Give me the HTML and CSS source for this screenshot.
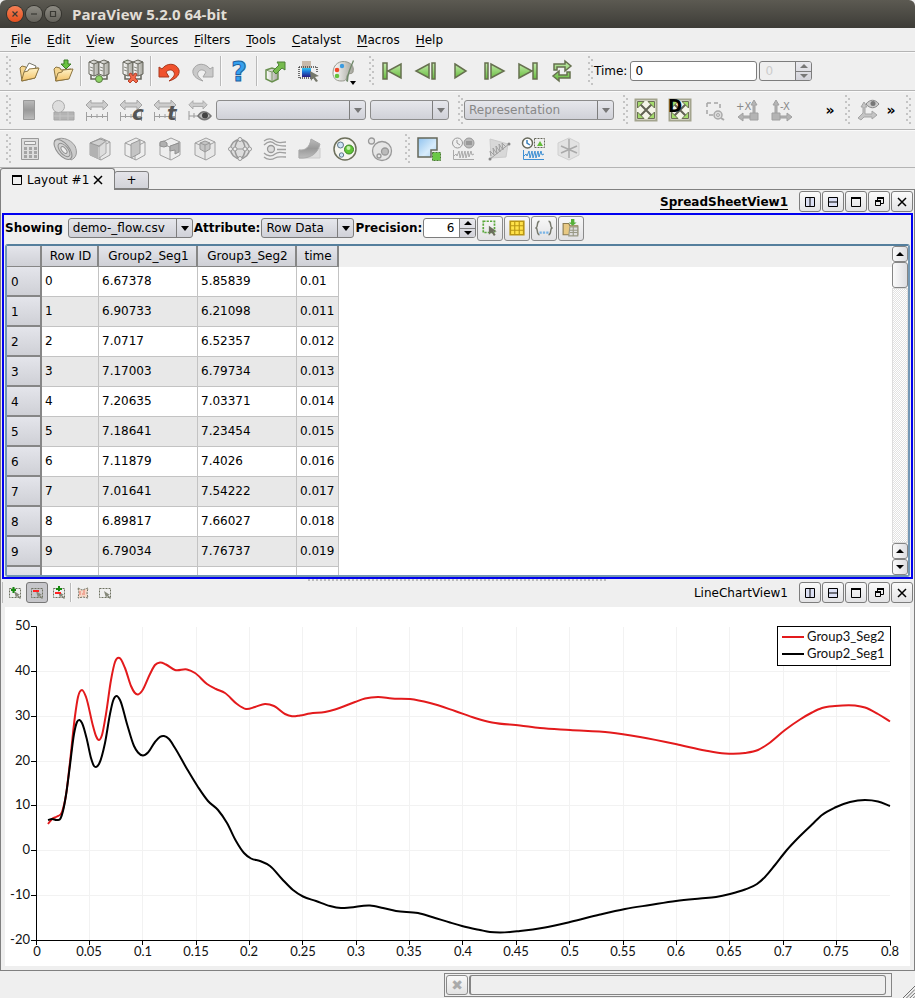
FILE: index.html
```html
<!DOCTYPE html>
<html lang="en">
<head>
<meta charset="utf-8">
<title>ParaView 5.2.0 64-bit</title>
<link rel="stylesheet" href="styles.css">
</head>
<body>
<svg class="defs" aria-hidden="true">
  <defs>
    <linearGradient id="green" x1="0" y1="0" x2="0" y2="1"><stop offset="0" stop-color="#c4ecac"/><stop offset="1" stop-color="#66bb3c"/></linearGradient>
    <linearGradient id="metal" x1="0" y1="0" x2="1" y2="0"><stop offset="0" stop-color="#fff"/><stop offset="1" stop-color="#a5a59c"/></linearGradient>
    <linearGradient id="gray" x1="0" y1="0" x2="0" y2="1"><stop offset="0" stop-color="#bbb"/><stop offset=".5" stop-color="#999"/><stop offset="1" stop-color="#bdbdbd"/></linearGradient>
    <linearGradient id="sky" x1="0" y1="0" x2="1" y2="1"><stop offset="0" stop-color="#8fc2ee"/><stop offset=".6" stop-color="#d8ecfb"/><stop offset="1" stop-color="#a8d0f2"/></linearGradient>
    <linearGradient id="folder" x1="0" y1="0" x2="0" y2="1"><stop offset="0" stop-color="#fff3c8"/><stop offset="1" stop-color="#f3c267"/></linearGradient>
    <linearGradient id="rainbow" x1="0" y1="0" x2="0" y2="1"><stop offset="0" stop-color="#38c8f0"/><stop offset=".4" stop-color="#1a78d8"/><stop offset="1" stop-color="#281880"/></linearGradient>
    <symbol id="i-folder" viewBox="0 0 24 24"><path d="M3 9l2-2 4 1 1 2 11-1-3 10-13 3z" fill="#f6d68e" stroke="#8b7440"/><path d="M7 13L12 4l7 3-3 8z" fill="#fff" stroke="#77776a"/><path d="M4.500 22L7 13l4-1 1-2 10-1-4 10z" fill="url(#folder)" stroke="#8b7440"/></symbol>
    <symbol id="i-folder-in" viewBox="0 0 24 24"><path d="M3 10l2-2 4 1 1 2 10-1-3 10-12 2z" fill="#f6d68e" stroke="#8b7440"/><path d="M4.500 22L7 14l4-1 1-2 10-1-4 10z" fill="url(#folder)" stroke="#8b7440"/><path d="M13 1h4v4h3l-5 5-5-5h3z" fill="#69c240" stroke="#3a7a26"/></symbol>
    <symbol id="i-servers" viewBox="0 0 24 24"><g stroke="#66665c"><path d="M2 3l5-2 5 2v12l-5 2-5-2z" fill="url(#metal)"/><path d="M12 3l5-2 5 2v12l-5 2-5-2z" fill="url(#metal)"/><path d="M2 3l5 2 5-2 5 2 5-2M7 5v12M17 5v12" fill="none"/><path d="M3 8l3 1M13 8l3 1M3 11l3 1M13 11l3 1" fill="none" stroke="#8c8c82"/><path d="M4 16v4h16v-4" fill="none" stroke-width="1.500"/></g></symbol>
    <symbol id="i-undo" viewBox="0 0 24 24"><path d="M2 18V8l3 2c4-6 14-7 17 1 1 5-3 9-10 11 5-4 7-7 4-10-2-2-5-1-7 1l3 5z" stroke-linejoin="round"/></symbol>
    <symbol id="i-first" viewBox="0 0 24 24"><path d="M3 4h4v16H3zM21 5v14L8 12z"/></symbol>
    <symbol id="i-prev" viewBox="0 0 24 24"><path d="M15 5v14L2 12zM18 4h3v16h-3z"/></symbol>
    <symbol id="i-play" viewBox="0 0 24 24"><path d="M7 5l11 7-11 7z"/></symbol>
    <symbol id="i-axis" viewBox="0 0 24 24"><path d="M14 15h8v7h-8zM17 15V7h-2l3-5 3 5h-2v8M14 18H7v-3l-5 4 5 4v-3h7"/></symbol>
    <symbol id="i-double" viewBox="0 0 24 24"><path d="M1 7l5-5v3h12V2l5 5-5 5V9H6v3z" fill="#ccc" stroke="#a5a5a5"/></symbol>
    <symbol id="i-ruler" viewBox="0 0 24 24"><path d="M1.500 14v9M22.500 14v9M1 18.500h22M6.500 16v4M12 16v4M17.500 16v4" fill="none" stroke="#a0a0a0"/></symbol>
    <symbol id="i-cube" viewBox="0 0 24 24"><path d="M2 6l11-5 9 4v13l-9 5-11-5zM2 6l10 4 10-5M12 10v13" stroke="#a0a0a0" stroke-linejoin="round"/></symbol>
    <symbol id="i-extent" viewBox="0 0 24 24"><path d="M1.500 1.500h21v21h-21z" fill="#f4f4e8" stroke="#a3a48e" stroke-width="2"/><path d="M6 6l12 12M18 6L6 18" stroke="#626254" stroke-width="2"/><path d="M3.500 3.500H10l-6.500 6.500zM20.500 3.500H14l6.500 6.500zM3.500 20.500H10L3.500 14zM20.500 20.500H14l6.500-6.500z" fill="#a4dc6c" stroke="#6b7054"/></symbol>
    <symbol id="i-cols" viewBox="0 0 12 12"><path d="M1.500 1.500h9v9h-9zM6 1.500v9" fill="#dce0f4" stroke="#000"/></symbol>
    <symbol id="i-rows" viewBox="0 0 12 12"><path d="M1.500 1.500h9v9h-9zM1.500 6h9" fill="#dce0f4" stroke="#000"/></symbol>
    <symbol id="i-max" viewBox="0 0 12 12"><path d="M1.500 2h9v8.500h-9z" fill="none" stroke="#000"/><path d="M1 1h10v2H1z"/></symbol>
    <symbol id="i-restore" viewBox="0 0 12 12"><path d="M4.500 5V2.500h6v5H8M2.500 5.500h5v4h-5z" fill="none" stroke="#000"/><path d="M4 1h7v2H4zM2 4h6v2H2z"/></symbol>
    <symbol id="i-close" viewBox="0 0 12 12"><path d="M2 2l8 8M10 2l-8 8" stroke="#000" stroke-width="1.500"/></symbol>
    <symbol id="i-pick" viewBox="0 0 14 14"><path d="M1.500 2.500h11v9h-11z" fill="none" stroke="#6d7060" stroke-dasharray="2 1"/><path d="M6 5l6 4-2 0 3 3-1 1-3-3-1 2z" fill="#85887a"/></symbol>
    <symbol id="i-pulse" viewBox="0 0 24 24"><path d="M1.500 13v9.500H22M2 19l2-2 1 2 2-5 1 7 2-7 1 7 2-7 1 7 2-7 1 6 2-6 1 4 2-1" fill="none"/></symbol>
  </defs>
</svg>

<header class="titlebar">
  <button class="win win-close" aria-label="Close"><svg viewBox="0 0 16 16"><path d="M5.500 5.500l5 5M10.500 5.500l-5 5"/></svg></button>
  <button class="win" aria-label="Minimize"><svg viewBox="0 0 16 16"><path d="M5 8h6"/></svg></button>
  <button class="win" aria-label="Maximize"><svg viewBox="0 0 16 16"><path d="M5.500 5.500h5v5h-5z"/></svg></button>
  <h1>ParaView 5.2.0 64-bit</h1>
</header>

<nav class="menubar">
  <button><u>F</u>ile</button><button><u>E</u>dit</button><button><u>V</u>iew</button><button><u>S</u>ources</button><button><u>F</u>ilters</button><button><u>T</u>ools</button><button><u>C</u>atalyst</button><button><u>M</u>acros</button><button><u>H</u>elp</button>
</nav>

<div class="toolbar" role="toolbar">
  <i class="grip first"></i>
  <button class="tool" aria-label="Open"><svg><use href="#i-folder"/></svg></button>
  <button class="tool" aria-label="Save data"><svg><use href="#i-folder-in"/></svg></button>
  <i class="sep"></i>
  <button class="tool" aria-label="Connect"><svg viewBox="0 0 24 24"><use href="#i-servers"/><circle cx="12" cy="20" r="3.500" fill="#8ed465" stroke="#5b7a45"/></svg></button>
  <button class="tool" aria-label="Disconnect"><svg viewBox="0 0 24 24"><use href="#i-servers"/><path d="M8 15l2-1 2 3 2-3 2 1-2 4 3 3-2 2-3-3-3 3-2-2 3-3z" fill="#f26a4a" stroke="#b8422c"/></svg></button>
  <i class="sep"></i>
  <button class="tool" aria-label="Undo"><svg class="undo"><use href="#i-undo"/></svg></button>
  <button class="tool" aria-label="Redo"><svg class="redo"><use href="#i-undo"/></svg></button>
  <i class="sep"></i>
  <button class="tool" aria-label="Help"><svg viewBox="0 0 24 24"><text class="help" x="12" y="22">?</text></svg></button>
  <i class="sep"></i>
  <button class="tool" aria-label="Find data"><svg viewBox="0 0 24 24"><path d="M3 11l6-2 6 2v9l-6 3-6-3z" fill="url(#metal)" stroke="#69904f" stroke-width="1.500"/><path d="M3 11l6 2 6-2M9 13v9" fill="none" stroke="#7d9a68"/><path d="M14 3h8v8l-3-2-6 6-3-3 6-6z" fill="#76bb4d" stroke="#4d7f36"/></svg></button>
  <button class="tool" aria-label="Edit color map"><svg viewBox="0 0 24 24"><path d="M5 2h9v10H5z" fill="#c8b9aa"/><path d="M5 9h9v9H5z" fill="url(#rainbow)"/><path d="M2 8v11h14M2 8h18v6" fill="none" stroke="#444" stroke-width="1.500" stroke-dasharray="1 1"/><path d="M13 12l9 5-4 1 3 4-2 1-3-4-2 3z" fill="#75776a"/></svg></button>
  <button class="tool" aria-label="Color palette"><svg viewBox="0 0 24 24"><path d="M2 14C2 5 9 1 16 3c6 2 7 6 6 10-1 3-5 0-6 4s-1 5-6 5c-5 0-8-3-8-8z" fill="url(#metal)" stroke="#96978c"/><circle cx="11" cy="7" r="2.200" fill="#3b9be0"/><circle cx="6" cy="11" r="2.300" fill="#f04828"/><circle cx="6" cy="17" r="2.300" fill="#65c33e"/><path d="M22 1c-3 7-6 14-7 21l2 1c0-7 3-14 6-21z" fill="#70886a"/></svg><svg class="more" viewBox="0 0 6 4"><path d="M0 0h6L3 4z"/></svg></button>
  <i class="grip"></i>
  <button class="tool" aria-label="First frame"><svg class="vcr"><use href="#i-first"/></svg></button>
  <button class="tool" aria-label="Previous frame"><svg class="vcr"><use href="#i-prev"/></svg></button>
  <button class="tool" aria-label="Play"><svg class="vcr"><use href="#i-play"/></svg></button>
  <button class="tool" aria-label="Next frame"><svg class="vcr flip"><use href="#i-prev"/></svg></button>
  <button class="tool" aria-label="Last frame"><svg class="vcr flip"><use href="#i-first"/></svg></button>
  <button class="tool" aria-label="Loop"><svg class="vcr" viewBox="0 0 24 24"><path d="M4 11V5h11V2l6 5-6 5V8H7v3zM20 13v6H9v3l-6-5 6-5v4h8v-3z"/></svg></button>
  <i class="grip"></i>
  <label for="time">Time:</label>
  <input id="time" class="field time" type="text" value="0">
  <span class="spin off"><input type="text" value="0" aria-label="Time step" disabled><span class="steps"><button aria-label="Up" disabled></button><button aria-label="Down" disabled></button></span></span>
</div>

<div class="toolbar" role="toolbar">
  <i class="grip first"></i>
  <button class="tool" aria-label="Color legend" disabled><svg viewBox="0 0 24 24"><path d="M6.500 2.500h11v19h-11z" fill="url(#gray)" stroke="#999"/></svg></button>
  <button class="tool" aria-label="Edit colors" disabled><svg viewBox="0 0 24 24"><path d="M3 14h20v8H3z" fill="#b4b4b4" stroke="#a5a5a5"/><path d="M9 14v8M17 14v8M3 18h20" stroke="#c4c4c4"/><circle cx="7.500" cy="8.500" r="6" fill="#ddd" stroke="#aaa"/></svg></button>
  <button class="tool" aria-label="Rescale to data" disabled><svg viewBox="0 0 24 24"><use href="#i-double"/><use href="#i-ruler"/></svg></button>
  <button class="tool" aria-label="Rescale to custom range" disabled><svg viewBox="0 0 24 24"><use href="#i-double"/><use href="#i-ruler"/><text class="mark" x="13" y="22">c</text></svg></button>
  <button class="tool" aria-label="Rescale over time" disabled><svg viewBox="0 0 24 24"><use href="#i-double"/><use href="#i-ruler"/><text class="mark" x="14" y="22">t</text></svg></button>
  <button class="tool" aria-label="Rescale to visible" disabled><svg viewBox="0 0 24 24"><use href="#i-double" width="20" height="20" x="1" y="1"/><path d="M2 13v9M2 18h9M7 15v5" stroke="#999"/><path d="M11 18c4-6 9-5 13 0-4 5-9 5-13 0z" fill="#bbb" stroke="#777" stroke-width="1.500"/><circle cx="18" cy="17.500" r="3" fill="#444"/></svg></button>
  <span class="combo off wide"><select aria-label="Color array" disabled><option></option></select></span>
  <span class="combo off component"><select aria-label="Component" disabled><option></option></select></span>
  <i class="grip"></i>
  <span class="combo off wide"><select aria-label="Representation" disabled><option>Representation</option></select></span>
  <i class="grip"></i>
  <button class="tool" aria-label="Reset camera"><svg><use href="#i-extent"/></svg></button>
  <button class="tool" aria-label="Zoom to data"><svg viewBox="0 0 24 24"><use href="#i-extent"/><text class="dmark" x="0" y="14">D</text></svg></button>
  <button class="tool" aria-label="Zoom to box" disabled><svg viewBox="0 0 24 24"><path d="M5 5h13v7M5 5v12h6" fill="none" stroke="#a5a5a5" stroke-width="1.500" stroke-dasharray="4 3"/><circle cx="16" cy="17" r="4" fill="#ddd" stroke="#aaa" stroke-width="1.500"/><circle cx="16" cy="17" r="1.500" fill="none" stroke="#aaa"/><path d="M19 20l3 2" stroke="#aaa" stroke-width="2"/></svg></button>
  <button class="tool" aria-label="View plus X" disabled><svg viewBox="0 0 24 24"><use href="#i-axis" class="axis"/><text class="xmark" x="0" y="12">+X</text></svg></button>
  <button class="tool" aria-label="View minus X" disabled><svg viewBox="0 0 24 24"><use href="#i-axis" class="axis" transform="translate(24 0) scale(-1 1)"/><text class="xmark" x="10" y="12">-X</text></svg></button>
  <button class="chevron gap" aria-label="More camera tools">»</button>
  <i class="grip"></i>
  <button class="tool" aria-label="Show axes" disabled><svg viewBox="0 0 24 24"><path d="M7 15V9H5l3-5 3 5H9v7h7v-3l5 4-5 4v-2H8l-3 3-3-2z" fill="#c4c4c4" stroke="#a5a5a5"/><path d="M10 6c4-5 9-5 13 0-4 5-9 5-13 0z" fill="#ccc" stroke="#888"/><circle cx="17" cy="5.500" r="2.500" fill="#777"/></svg></button>
  <button class="chevron" aria-label="More axes tools">»</button>
  <i class="grip"></i>
</div>

<div class="toolbar filters" role="toolbar">
  <i class="grip first"></i>
  <button class="tool" aria-label="Calculator" disabled><svg viewBox="0 0 24 24"><path d="M3.500 1.500h17v21h-17z" fill="#ddd" stroke="#999"/><path d="M6.500 4.500h11v3h-11z" fill="#eee" stroke="#999"/><path d="M6 10h3v3H6zM11 10h3v3h-3zM16 10h3v3h-3zM6 14h3v3H6zM11 14h3v3h-3zM16 14h3v3h-3zM6 18h3v3H6zM11 18h3v3h-3zM16 18h3v3h-3z" fill="#a5a5a5"/></svg></button>
  <button class="tool" aria-label="Contour" disabled><svg viewBox="0 0 24 24"><path d="M1 4C6-1 17 1 22 9c3 7 1 12-4 14z" fill="#ccc" stroke="#999"/><g fill="#d2d2d2" stroke="#909090"><ellipse cx="10" cy="12.500" rx="6" ry="12" transform="rotate(-40 10 12.500)"/><ellipse cx="11" cy="13" rx="4" ry="8" transform="rotate(-40 11 13)"/><ellipse cx="11" cy="13" rx="2" ry="4" fill="#eee" transform="rotate(-40 11 13)"/></g></svg></button>
  <button class="tool" aria-label="Clip" disabled><svg viewBox="0 0 24 24"><use href="#i-cube" fill="#e8e8e8"/><path d="M2 6l8 3v13l-8-4z" fill="#b2b2b2"/><path d="M2 6l10-4 6 2-7 5z" fill="#d0d0d0" stroke="#999"/><path d="M11 10l7-6v12l-7 5z" fill="#ddd" stroke="#aaa"/></svg></button>
  <button class="tool" aria-label="Slice" disabled><svg viewBox="0 0 24 24"><use href="#i-cube" fill="#eee"/><path d="M8 7l9-4v13l-9 5z" fill="#c4c4c4" stroke="#999"/></svg></button>
  <button class="tool" aria-label="Threshold" disabled><svg viewBox="0 0 24 24"><use href="#i-cube" fill="#eee"/><path d="M2 5l4-1 3 2v3L6 10 2 9zM12 9l9-3v9l-4 2v-4l-5 1z" fill="#b0b0b0" stroke="#909090"/></svg></button>
  <button class="tool" aria-label="Extract subset" disabled><svg viewBox="0 0 24 24"><use href="#i-cube" fill="#e8e8e8"/><path d="M7 6l5-2 5 2v6l-5 3-5-3z" fill="#c4c4c4" stroke="#999"/><path d="M7 6l5 2 5-2M12 8v7" fill="none" stroke="#999"/></svg></button>
  <button class="tool" aria-label="Glyph" disabled><svg viewBox="0 0 24 24"><circle cx="12" cy="12" r="9.500" fill="#ddd" stroke="#999" stroke-width="1.500"/><ellipse cx="12" cy="12" rx="5" ry="9.500" fill="none" stroke="#999" stroke-width="1.500"/><path d="M2 12h20" stroke="#999"/><g fill="#eee" stroke="#999"><circle cx="12" cy="2.500" r="2"/><circle cx="12" cy="21.500" r="2"/><circle cx="2.500" cy="12" r="2"/><circle cx="21.500" cy="12" r="2"/><circle cx="7" cy="12" r="2"/><circle cx="17" cy="12" r="2"/></g></svg></button>
  <button class="tool" aria-label="Stream tracer" disabled><svg viewBox="0 0 24 24"><path d="M1 4c4-3 7-3 11 0s6 1 11 1M1 8c4-4 8-4 11-1 3 2 6 2 11 2M14 12.500h9M1 16c3 3 8 4 11 1 3-2 5-2 11-1M1 20c3 3 8 3 11 1 3-2 6-1 11-1" fill="none" stroke="#a0a0a0" stroke-width="1.300"/><circle cx="8" cy="12" r="3.500" fill="#ddd" stroke="#999" stroke-width="1.300"/></svg></button>
  <button class="tool" aria-label="Warp" disabled><svg viewBox="0 0 24 24"><path d="M1 13h12l9-2v10H1z" fill="#ddd" stroke="#ccc"/><path d="M1 13c6 1 11-3 12-11l9 5c-2 9-9 15-21 14z" fill="url(#gray)" stroke="#aaa"/></svg></button>
  <button class="tool" aria-label="Group datasets"><svg viewBox="0 0 24 24"><circle cx="12" cy="12" r="11" fill="#f6f6f0" stroke="#6d705c" stroke-width="1.500"/><circle cx="7.500" cy="8" r="3" fill="#cfe5f6" stroke="#5f7788"/><circle cx="8.500" cy="18" r="2.200" fill="#cfe5f6" stroke="#5f7788"/><circle cx="16" cy="12.500" r="4.500" fill="#5fc636" stroke="#3d8424"/><circle cx="15.500" cy="11" r="2" fill="#c5f2ac"/></svg></button>
  <button class="tool" aria-label="Extract level" disabled><svg viewBox="0 0 24 24"><g fill="#e6e6e6" stroke="#999" stroke-width="1.300"><circle cx="14" cy="14" r="9.500"/><circle cx="3.500" cy="4" r="3"/><circle cx="17" cy="14.500" r="3.500" fill="#bbb"/><circle cx="11" cy="19" r="2"/></g></svg></button>
  <i class="grip"></i>
  <button class="tool" aria-label="Extract selection"><svg viewBox="0 0 24 24"><path d="M1 1h19v12h-6v7H1z" fill="url(#sky)" stroke="#66685a" stroke-width="1.500"/><path d="M15.500 15.500h8v8h-8z" fill="#6ac845" stroke="#4a7a34" stroke-dasharray="2 1"/></svg></button>
  <button class="tool" aria-label="Plot global variables" disabled><svg viewBox="0 0 24 24"><circle cx="5.500" cy="6" r="5" fill="#eee" stroke="#999"/><path d="M5 3v3l3 2" fill="none" stroke="#999"/><circle cx="17" cy="6" r="5" fill="#bbb" stroke="#999"/><path d="M14 4h6v4h-6z" fill="#999"/><use href="#i-pulse" stroke="#aaa"/></svg></button>
  <button class="tool" aria-label="Plot over line" disabled><svg viewBox="0 0 24 24"><path d="M3 2l18 5-2 13-15 1z" fill="#d8d8d8" stroke="#ccc"/><path d="M3 22L22 7M4 19l-1-5 4 4-1-7 4 6-1-8 4 6-1-8 4 6-1-7 4 4" fill="none" stroke="#a0a0a0"/><circle cx="3" cy="22" r="1.500" fill="#888"/><circle cx="22" cy="7" r="1.500" fill="#888"/></svg></button>
  <button class="tool" aria-label="Plot selection over time"><svg viewBox="0 0 24 24"><circle cx="5.500" cy="6" r="5" fill="#fff" stroke="#66685a" stroke-width="1.500"/><path d="M5 3v3l3 2" fill="none" stroke="#3880bb" stroke-width="1.500"/><path d="M12.500 1.500h10v9h-10z" fill="none" stroke="#66685a" stroke-dasharray="2 1"/><path d="M15 9h6l-3-5z" fill="#62bd38"/><use href="#i-pulse" stroke="#3e8fd3"/></svg></button>
  <button class="tool" aria-label="Probe" disabled><svg viewBox="0 0 24 24"><path d="M1 6l11-5 10 5v12l-10 5-11-5z" fill="#e2e2e2" stroke="#d0d0d0"/><path d="M12 2v19M4 9l16 7M20 9L4 16" stroke="#aaa" stroke-width="1.500"/></svg></button>
</div>

<div class="tabs" role="tablist">
  <div class="tab current" role="tab"><svg class="mini" viewBox="0 0 12 12"><use href="#i-max"/></svg><span>Layout #1</span><button aria-label="Close layout"><svg class="mini"><use href="#i-close"/></svg></button></div>
  <button class="tab add" role="tab">+</button>
</div>

<main class="pane">
  <section class="view">
    <header class="viewhead">
      <h2 class="active">SpreadSheetView1</h2>
      <div class="viewbtns">
        <button aria-label="Split horizontal"><svg><use href="#i-cols"/></svg></button><button aria-label="Split vertical"><svg><use href="#i-rows"/></svg></button><button aria-label="Maximize view"><svg><use href="#i-max"/></svg></button><button aria-label="Undock"><svg><use href="#i-restore"/></svg></button><button aria-label="Close view"><svg><use href="#i-close"/></svg></button>
      </div>
    </header>
    <div class="selected">
      <div class="sheetbar">
        <label for="showing" class="wide-label">Showing</label>
        <span class="combo source"><select id="showing"><option>demo-_flow.csv</option></select></span>
        <label for="attr">Attribute:</label>
        <span class="combo attr"><select id="attr"><option>Row Data</option></select></span>
        <label for="prec">Precision:</label>
        <span class="spin"><input id="prec" type="text" value="6"><span class="steps"><button aria-label="Increase"></button><button aria-label="Decrease"></button></span></span>
        <button class="sq" aria-label="Selected only"><svg viewBox="0 0 16 16"><path d="M2 2h10v10H2z" fill="none" stroke="#5aa83c" stroke-width="1.500" stroke-dasharray="2 1"/><path d="M7 6l7 5-3 0 2 3-1.500 1-2-3L7 14z" fill="#6c6e5e"/></svg></button>
        <button class="sq" aria-label="Columns"><svg viewBox="0 0 16 16"><path d="M2 2h12v12H2z" fill="#ffe24a" stroke="#b99614" stroke-width="1.500"/><path d="M6 2v12M10 2v12M2 6h12M2 10h12" stroke="#b99614"/></svg></button>
        <button class="sq" aria-label="Cell connectivity"><svg viewBox="0 0 16 16"><path d="M4 2C1 2 3 7 1 8c2 1 0 6 3 6M12 2c3 0 1 5 3 6-2 1 0 6-3 6" fill="none" stroke="#77796d" stroke-width="1.300"/><path d="M4 11h2v2H4zM7 11h2v2H7zM10 11h2v2h-2z" fill="#79b4e6"/></svg></button>
        <button class="sq" aria-label="Export"><svg viewBox="0 0 16 16"><path d="M1 4h5l1 2h7v8H1z" fill="#e8c983" stroke="#8c7b50"/><path d="M7 7h7v8H6z" fill="#ddd" stroke="#999985"/><path d="M7 10h7M7 12h7M10 7v8" stroke="#999985"/><path d="M8 0h3v3h2L9.500 6 6 3h2z" fill="#55b139"/></svg></button>
      </div>
      <div class="sheet">
        <div class="grid">
          <table>
            <thead><tr><th class="c-id"></th><th class="c-row">Row ID</th><th class="c-val">Group2_Seg1</th><th class="c-val">Group3_Seg2</th><th class="c-time">time</th></tr></thead>
            <tbody>
              <tr><th>0</th><td>0</td><td>6.67378</td><td>5.85839</td><td>0.01</td></tr>
              <tr><th>1</th><td>1</td><td>6.90733</td><td>6.21098</td><td>0.011</td></tr>
              <tr><th>2</th><td>2</td><td>7.0717</td><td>6.52357</td><td>0.012</td></tr>
              <tr><th>3</th><td>3</td><td>7.17003</td><td>6.79734</td><td>0.013</td></tr>
              <tr><th>4</th><td>4</td><td>7.20635</td><td>7.03371</td><td>0.014</td></tr>
              <tr><th>5</th><td>5</td><td>7.18641</td><td>7.23454</td><td>0.015</td></tr>
              <tr><th>6</th><td>6</td><td>7.11879</td><td>7.4026</td><td>0.016</td></tr>
              <tr><th>7</th><td>7</td><td>7.01641</td><td>7.54222</td><td>0.017</td></tr>
              <tr><th>8</th><td>8</td><td>6.89817</td><td>7.66027</td><td>0.018</td></tr>
              <tr><th>9</th><td>9</td><td>6.79034</td><td>7.76737</td><td>0.019</td></tr>
              <tr><th></th><td></td><td></td><td></td><td></td></tr>
            </tbody>
          </table>
        </div>
        <div class="scroll"><button class="up" aria-label="Scroll up"></button><div class="thumb"></div><div class="track"></div><button class="up" aria-label="Page up"></button><button class="down" aria-label="Scroll down"></button></div>
      </div>
    </div>
  </section>
  <div class="splitter"></div>
  <section class="view">
    <header class="viewhead">
      <div class="picks">
        <button aria-label="Add selection"><svg viewBox="0 0 14 14"><use href="#i-pick"/><path d="M3 4h5M5.500 1v6" stroke="#178a10" stroke-width="2"/></svg></button>
        <button class="pressed" aria-label="Subtract selection"><svg viewBox="0 0 14 14"><use href="#i-pick"/><path d="M3 5h6" stroke="#f22" stroke-width="2"/></svg></button>
        <button aria-label="Toggle selection"><svg viewBox="0 0 14 14"><use href="#i-pick"/><path d="M4 3h6M7 0v5" stroke="#178a10" stroke-width="2"/><path d="M3 7h6" stroke="#f22" stroke-width="2"/></svg></button>
        <i class="sep"></i>
        <button aria-label="Polygon selection"><svg viewBox="0 0 14 14"><path d="M2 2l4 2 6-2-1 5 1 5-5-1-5 1 1-5z" fill="#f6d8c8" stroke="#6f7262" stroke-dasharray="2 1"/><path d="M4 5v4M6 8h3M8 4v3" stroke="#e98" stroke-width="1.500"/></svg></button>
        <button aria-label="Rectangle selection"><svg><use href="#i-pick"/></svg></button>
      </div>
      <h2>LineChartView1</h2>
      <div class="viewbtns">
        <button aria-label="Split horizontal"><svg><use href="#i-cols"/></svg></button><button aria-label="Split vertical"><svg><use href="#i-rows"/></svg></button><button aria-label="Maximize view"><svg><use href="#i-max"/></svg></button><button aria-label="Undock"><svg><use href="#i-restore"/></svg></button><button aria-label="Close view"><svg><use href="#i-close"/></svg></button>
      </div>
    </header>
    <svg class="chart" viewBox="5 607 905 359" role="img" aria-label="Group2_Seg1 and Group3_Seg2 over time">
      <path class="gridlines" d="M89.500 627v313M142.500 627v313M196.500 627v313M249.500 627v313M302.500 627v313M356.500 627v313M409.500 627v313M462.500 627v313M516.500 627v313M569.500 627v313M623.500 627v313M676.500 627v313M729.500 627v313M783.500 627v313M836.500 627v313M37 671.500h853M37 716.500h853M37 761.500h853M37 805.500h853M37 850.500h853M37 895.500h853"/>
      <path class="axes" d="M31 626.500h5.500v314M31 940.500h859.500v5M31 671.500h5M31 716.500h5M31 761.500h5M31 805.500h5M31 850.500h5M31 895.500h5M36.500 940v5M89.500 940v5M142.500 940v5M196.500 940v5M249.500 940v5M302.500 940v5M356.500 940v5M409.500 940v5M462.500 940v5M516.500 940v5M569.500 940v5M623.500 940v5M676.500 940v5M729.500 940v5M783.500 940v5M836.500 940v5"/>
      <g class="ylabels"><text x="30" y="630">50</text><text x="30" y="675">40</text><text x="30" y="720">30</text><text x="30" y="765">20</text><text x="30" y="809">10</text><text x="30" y="854">0</text><text x="30" y="899">-10</text><text x="30" y="944">-20</text></g>
      <g class="xlabels"><text x="37" y="956">0</text><text x="89" y="956">0.05</text><text x="143" y="956">0.1</text><text x="196" y="956">0.15</text><text x="249" y="956">0.2</text><text x="303" y="956">0.25</text><text x="356" y="956">0.3</text><text x="409" y="956">0.35</text><text x="463" y="956">0.4</text><text x="516" y="956">0.45</text><text x="570" y="956">0.5</text><text x="623" y="956">0.55</text><text x="676" y="956">0.6</text><text x="729" y="956">0.65</text><text x="783" y="956">0.7</text><text x="836" y="956">0.75</text><text x="890" y="956">0.8</text></g>
      <path id="seg2" class="line red"/>
      <path id="seg1" class="line"/>
      <rect class="legend" x="777.500" y="626.500" width="113" height="39"/>
      <path class="line red" d="M782 637h22"/><path class="line" d="M782 654h22"/>
      <text x="807" y="641">Group3_Seg2</text><text x="807" y="658">Group2_Seg1</text>
    </svg>
  </section>
</main>

<footer class="status">
  <div class="progress"><button aria-label="Abort" disabled>✖</button><div class="bar"></div></div>
  <svg class="resize" viewBox="0 0 14 14"><path d="M0 14L14 0M4 14L14 4M8 14l6-6M12 14l2-2"/></svg>
</footer>
<script src="chart.js"></script>
</body>
</html>
```
FILE: styles.css
```css
* { box-sizing: border-box; }
body { margin: 0; min-height: 100vh; display: flex; flex-direction: column; background: #efefef; color: #000; font: 12px "DejaVu Sans", sans-serif; }
button, input, select { font: inherit; color: inherit; margin: 0; padding: 0; }
button { border: 0; background: none; }
h1, h2 { margin: 0; }
svg { display: block; }
.defs { position: absolute; width: 0; height: 0; }

.titlebar { display: flex; align-items: center; gap: 3px; height: 28px; padding-left: 7px; background: linear-gradient(#5c5a52, #3d3c37); border-radius: 6px 6px 0 0; }
.titlebar h1 { margin-left: 8px; color: #e2ded6; font: bold 15px "Open Sans", sans-serif; }
.win { width: 16px; height: 16px; border-radius: 50%; background: linear-gradient(#8d8b83, #65635c); box-shadow: 0 0 0 1px #33322d; }
.win path { fill: none; stroke: #3a3934; stroke-width: 1.2; }
.win-close { background: linear-gradient(#f58055, #e5501f); }

.menubar { display: flex; height: 23px; padding-left: 3px; align-items: center; }
.menubar button { padding: 0 8px; }
.menubar u { text-underline-offset: 2px; }

.toolbar { display: flex; align-items: center; height: 39px; border-top: 1px solid #b4b4b4; box-shadow: inset 0 1px #fafafa; }
.filters { height: 38px; }
.tool { position: relative; flex: none; display: grid; place-items: center; width: 34px; height: 34px; }
.filters .tool { width: 35px; }
.tool svg { width: 24px; height: 24px; overflow: visible; }
.tool .more { position: absolute; right: 4px; bottom: 3px; width: 6px; height: 4px; }
.undo { fill: #f0522d; stroke: #a83a20; }
.redo { fill: #c9c9c9; stroke: #a5a5a5; transform: scaleX(-1); }
.vcr { fill: url(#green); stroke: #66704f; stroke-width: 1.5; }
.flip { transform: scaleX(-1); }
.axis { fill: #b4b4b4; stroke: #a0a0a0; }
.help { font: bold 27px "DejaVu Sans", sans-serif; text-anchor: middle; fill: #35a0ee; stroke: #1d5f9d; }
.mark { font: italic bold 20px "DejaVu Sans", sans-serif; fill: #555; }
.dmark { font: bold 17px "DejaVu Sans", sans-serif; }
.xmark { font: 10px "DejaVu Sans", sans-serif; fill: #888; }
.grip { flex: none; width: 6px; height: 30px; margin-left: 9px; background: radial-gradient(circle at 1px 1px, #c4c4c4 1px, transparent 1px) 0 0 / 6px 6px, radial-gradient(circle at 4px 4px, #c4c4c4 1px, transparent 1px) 0 0 / 6px 6px; }
.grip.first { margin-left: 6px; }
.filters .grip:not(.first) { margin-left: 8px; }
.sep { flex: none; width: 2px; height: 30px; background: #b9b9b9; border-right: 1px solid #fafafa; }
.chevron { width: 12px; font-weight: bold; font-size: 14px; }
.chevron.gap { margin-left: 25px; }

.field { height: 20px; border: 1px solid #7d7d7d; border-radius: 3px; background: #fff; padding: 0 4px; }
.time { width: 127px; margin: 0 2px 0 3px; }

.combo { position: relative; flex: none; display: inline-block; height: 20px; border: 1px solid #7d7d7d; border-radius: 3px; background: linear-gradient(#e6e7ec, #d0d1d8); }
.combo select { display: block; width: 100%; height: 18px; appearance: none; border: 0; background: none; padding: 0 4px; opacity: 1; }
.combo::before { content: ""; position: absolute; right: 15px; top: 0; bottom: 0; width: 1px; background: #7d7d7d; }
.combo::after { content: ""; position: absolute; right: 3px; top: 7px; border: 4px solid transparent; border-top: 5px solid #000; border-bottom: 0; }
.combo.off { color: #888; border-color: #8c8c8c; }
.combo.off::after { border-top-color: #777; }
.wide { width: 150px; }
.component { width: 79px; margin-left: 4px; }
.source { width: 125px; }
.attr { width: 93px; }

.spin { display: flex; flex: none; width: 53px; height: 20px; border: 1px solid #7d7d7d; border-radius: 3px; background: #fff; overflow: hidden; }
.spin input { width: 100%; min-width: 0; border: 0; background: none; padding: 0 5px; text-align: right; }
.steps { flex: none; width: 16px; display: flex; flex-direction: column; border-left: 1px solid #7d7d7d; background: linear-gradient(#e9e9ee, #d3d3da); }
.steps button { flex: 1; display: grid; place-items: center; }
.steps button + button { border-top: 1px solid #7d7d7d; }
.steps button::after, .up::after, .down::after { content: ""; border: 4px solid transparent; }
.steps button:first-child::after, .up::after { border-bottom-color: #000; border-top: 0; }
.steps button:last-child::after, .down::after { border-top-color: #000; border-bottom: 0; }
.spin.off { background: #efefef; color: #ccc; }
.spin.off input { text-align: left; }
.spin.off .steps button:first-child::after { border-bottom-color: #777; }
.spin.off .steps button:last-child::after { border-top-color: #777; }

.tabs { display: flex; align-items: flex-end; height: 22px; border-top: 1px solid #b4b4b4; }
.tab { border: 1px solid #808080; border-radius: 3px 3px 0 0; }
.current { position: relative; z-index: 1; display: flex; align-items: center; gap: 4px; height: 22px; margin-bottom: -1px; width: 115px; padding-left: 10px; border-bottom: 0; background: #efefef; }
.mini { width: 12px; height: 12px; }
.current button { margin-left: -1px; }
.add { width: 35px; height: 18px; margin-left: -1px; background: linear-gradient(#e4e4e9, #d2d3d9); }

.pane { display: flex; flex-direction: column; border: 1px solid #808080; padding: 0 1px 4px; }
.view { display: flex; flex-direction: column; }
.viewhead { display: flex; align-items: center; height: 23px; gap: 11px; }
.viewhead h2 { margin-left: auto; font: 12px "DejaVu Sans", sans-serif; }
.viewhead .active { font-weight: bold; text-decoration: underline; text-underline-offset: 3px; }
.viewbtns { display: flex; gap: 1px; }
.viewbtns button { display: grid; place-items: center; width: 22px; height: 21px; border: 1px solid #7d7d7d; border-radius: 3px; background: linear-gradient(#fafafa, #e3e3e5); }
.viewbtns svg { width: 12px; height: 12px; }

.selected { border: 2px solid #0000f0; padding: 0 1px; }
.sheetbar { display: flex; align-items: center; height: 29px; padding-bottom: 3px; gap: 1px; font-weight: bold; }
.sheetbar select, .sheetbar input { font-weight: normal; }
.sheetbar .wide-label { margin-right: 4px; }
.sq { flex: none; display: grid; place-items: center; width: 26px; height: 25px; border: 1px solid #8a8a8a; border-radius: 3px; background: linear-gradient(#f8f8f8, #e2e2e4); }
.sq svg { width: 18px; height: 18px; }

.sheet { display: flex; height: 333px; border: 2px solid #7397b4; border-top-color: #557f9d; border-radius: 3px; background: #fff; padding: 0; }
.grid { flex: 1; overflow: hidden; background: linear-gradient(#efefef 21px, #fff 21px); }
table { border-collapse: separate; border-spacing: 0; table-layout: fixed; width: 332px; }
th { font-weight: normal; padding: 0; background: linear-gradient(#e4e5eb, #cfd0d6); border-right: 2px solid #868686; border-bottom: 2px solid #868686; }
thead th { height: 21px; padding-left: 2px; border-bottom-width: 1px; }
tbody th, td { height: 30px; text-align: left; }
tbody th { padding: 2px 0 0 4px; }
td { padding: 0 0 2px 3px; background: #fff; border-right: 1px solid #c3c3c3; border-bottom: 1px solid #c3c3c3; }
tr:nth-child(even) td { background: #e8e8e8; }
.c-id { width: 35px; }
.c-row { width: 57px; }
.c-val { width: 99px; }
.c-time { width: 42px; }

.scroll { width: 16px; display: flex; flex-direction: column; }
.scroll button, .thumb { flex: none; display: grid; place-items: center; height: 16px; border: 1px solid #858585; border-radius: 3px; background: linear-gradient(90deg, #fafafa, #dedee2); }
.scroll .thumb { height: 26px; }
.track { flex: 1; background: repeating-conic-gradient(#e2e2e2 0 25%, #fff 0 50%) 0 0 / 2px 2px; border: 1px solid #ddd; }

.splitter { height: 2px; width: 300px; align-self: center; background: radial-gradient(circle at 1px 1px, #bbb 1px, transparent 1px) 0 0 / 4px 2px; }
.picks { display: flex; align-items: center; padding-left: 1px; border-left: 1px solid #bbb; height: 21px; }
.picks button { display: grid; place-items: center; width: 22px; height: 21px; border: 1px solid transparent; border-radius: 3px; }
.picks .pressed { border-color: #777; background: #c6c6ca; }
.picks svg { width: 14px; height: 14px; }
.picks .sep { height: 19px; }
.chart { width: calc(100% - 6px); height: auto; margin: 3px 3px 0; background: #fff; }
.chart text { font: 13px Lato, sans-serif; fill: #111; }
.ylabels { text-anchor: end; }
.xlabels { text-anchor: middle; }
.gridlines { stroke: #f2f2f2; fill: none; }
.axes { stroke: #000; fill: none; }
.line { stroke: #000; stroke-width: 2; fill: none; }
.red { stroke: #e31a1c; }
.legend { fill: #fff; stroke: #000; }

.status { flex: 1; display: flex; position: relative; justify-content: flex-end; padding: 2px 23px 0 0; }
.progress { display: flex; width: 448px; height: 24px; border: 1px solid #858585; padding: 1px 5px 1px 1px; gap: 1px; }
.progress button { width: 22px; height: 20px; border: 1px solid #8a8a8a; border-radius: 3px; background: linear-gradient(#f8f8f8, #e3e3e3); color: #aaa; font-size: 14px; line-height: 14px; }
.bar { flex: 1; border: 2px solid #858585; border-width: 1px 1px 1px 2px; border-radius: 3px; }
.resize { position: absolute; right: 0; bottom: 0; width: 12px; height: 12px; stroke: #555; }
```
FILE: chart.js
```js
const seg2 = [[48,824],[52,819],[57,816.5],[62,812],[66,795],[70,762],[75,716],[78,697],[82,690],[86,697],[93,726],[96,736],[99,740],[102,735],[106,714],[111,680],[115,662],[119.5,658],[125,668],[131,686],[134.5,692.5],[138,694.5],[142,691],[150,674],[155,665],[160,662.5],[166,664.5],[175,670],[187,669.5],[195,673],[207,684],[216,689],[225,693],[237,704],[246,709],[255,707],[265,704],[274,706],[285,714],[292,716.3],[300,715.5],[310,713.5],[325,712],[335,709.5],[355,702],[365,698.5],[378,697],[392,698.5],[410,699],[430,703],[455,711],[475,718],[492,722.5],[520,725.5],[540,728],[570,730],[610,732.5],[640,737],[680,745],[705,750.5],[725,753.5],[745,753],[758,750],[768,744],[785,730],[800,719.5],[812,712.5],[822,708],[835,706],[855,705.5],[865,707.5],[878,714],[890,721.5]];
const seg1 = [[48,820],[52,819],[57,820],[60.5,818.5],[63,811],[66,795],[70,765],[74,734],[77,722],[79.5,720],[82,723],[87,740],[91,758],[94,766],[96,767],[99,764],[105,743],[110,714],[113,701],[116.5,696],[120,700],[127,724],[134,746],[138,752.5],[143,755.5],[148,752.500],[155,742],[160,736.8],[164,736],[169,739],[175,748],[187,769],[198,787],[208,801],[218,810],[227,823],[236,841],[244,853],[251,858.5],[260,861],[270,866],[282,879],[293,890],[303,896.5],[316,901],[330,906],[341,908],[350,907.5],[370,905.5],[383,908],[396,911],[418,913],[432,917],[450,922.5],[462,926],[480,930],[490,932],[500,932.5],[520,931],[545,927.5],[570,922],[600,914.5],[625,909],[650,905],[676,901],[700,898.5],[716,897],[730,894],[745,889.5],[757,884],[765,877],[775,865],[786,851],[800,836],[812,824.5],[822,815],[835,807.5],[850,802],[865,800],[878,801.5],[890,806]];

// Cubic Hermite interpolation; each slope is that of the parabola through the sample and its neighbours.
function smooth(points) {
  const rise = i => (points[i + 1][1] - points[i][1]) / (points[i + 1][0] - points[i][0]);
  const last = points.length - 1;
  const slope = points.map((p, i) => {
    if (i === 0) return rise(0);
    if (i === last) return rise(last - 1);
    const left = p[0] - points[i - 1][0];
    const right = points[i + 1][0] - p[0];
    return (rise(i - 1) * right + rise(i) * left) / (left + right);
  });
  let d = "M" + points[0];
  for (let i = 1; i <= last; i++) {
    const [x0, y0] = points[i - 1];
    const [x1, y1] = points[i];
    const h = (x1 - x0) / 3;
    d += `C${x0 + h} ${y0 + slope[i - 1] * h} ${x1 - h} ${y1 - slope[i] * h} ${x1} ${y1}`;
  }
  return d;
}

document.getElementById("seg2").setAttribute("d", smooth(seg2));
document.getElementById("seg1").setAttribute("d", smooth(seg1));
```
